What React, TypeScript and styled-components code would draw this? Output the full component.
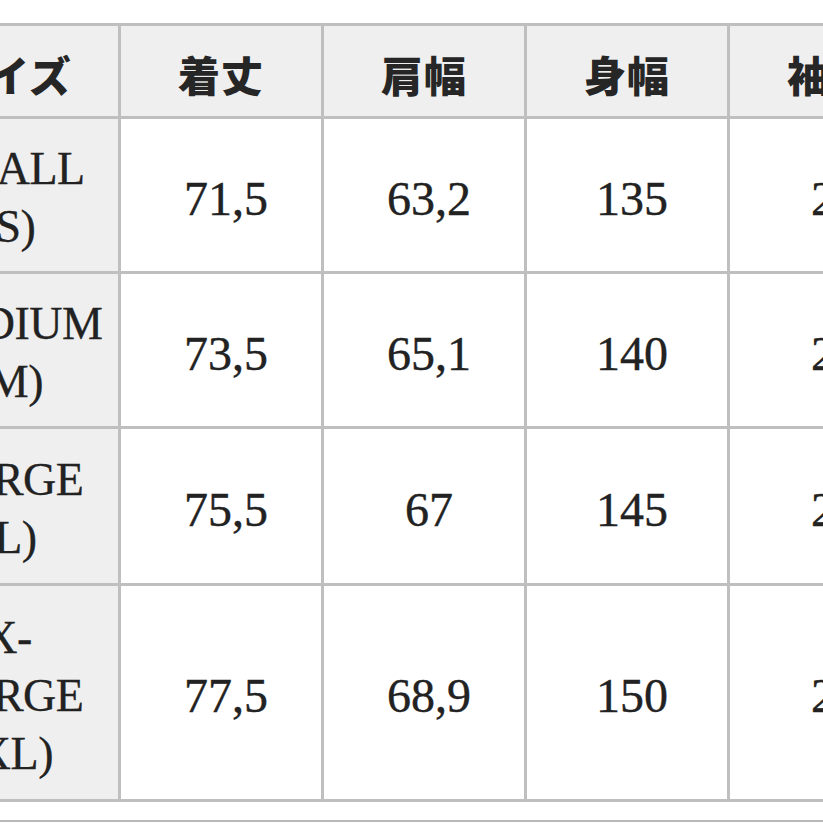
import styled, { createGlobalStyle } from 'styled-components'

const Global = createGlobalStyle`
  html, body {
    margin: 0;
    padding: 0;
    background: #ffffff;
  }
  body {
    font-family: "Liberation Serif", "Noto Sans CJK JP", serif;
    color: #222222;
  }
`

const Page = styled.div`
  width: 823px;
  height: 823px;
  overflow: hidden;
  padding-top: 23px;
  box-sizing: border-box;
`

// 表は左右が画面外にはみ出している
const Sheet = styled.div`
  display: grid;
  grid-template-columns: 220px repeat(4, 200px);
  grid-template-rows: 90px 152px 152px 154px 213px;
  gap: 3px;
  padding: 3px;
  width: max-content;
  margin-left: -105px;
  background: #bfbfbf;
`

const HeadCell = styled.div`
  display: flex;
  align-items: center;
  justify-content: center;
  padding-top: 4px;
  background: #efefef;
  font-family: "Noto Sans CJK JP", sans-serif;
  font-weight: 900;
  font-size: 42px;
  color: #262626;
  letter-spacing: 1px;
`

const SizeCell = styled.div`
  display: flex;
  align-items: center;
  justify-content: center;
  padding: 6px 14px 0;
  background: #efefef;
  font-size: 46px;
  letter-spacing: -0.5px;
  line-height: 58px;
  text-align: center;
  -webkit-text-stroke: 0.3px #222;
`

const ValueCell = styled.div`
  display: flex;
  align-items: center;
  justify-content: center;
  padding: 6px 0 0 10px;
  background: #ffffff;
  font-size: 48px;
  -webkit-text-stroke: 0.4px #222;
`

const Rule = styled.div`
  margin-top: 18px;
  border-top: 2px solid #b8b8b8;
`

const headers = ['サイズ', '着丈', '肩幅', '身幅', '袖丈']

const rows = [
  { size: 'SMALL (S)', values: ['71,5', '63,2', '135', '23'] },
  { size: 'MEDIUM (M)', values: ['73,5', '65,1', '140', '24'] },
  { size: 'LARGE (L)', values: ['75,5', '67', '145', '25'] },
  { size: 'X-LARGE (XL)', values: ['77,5', '68,9', '150', '26'] },
]

export default function App() {
  return (
    <>
      <Global />
      <Page>
        <Sheet>
          {headers.map((h) => (
            <HeadCell key={h}>{h}</HeadCell>
          ))}
          {rows.map((r) => [
            <SizeCell key={r.size}>{r.size}</SizeCell>,
            ...r.values.map((v, i) => <ValueCell key={r.size + i}>{v}</ValueCell>),
          ])}
        </Sheet>
        <Rule />
      </Page>
    </>
  )
}
